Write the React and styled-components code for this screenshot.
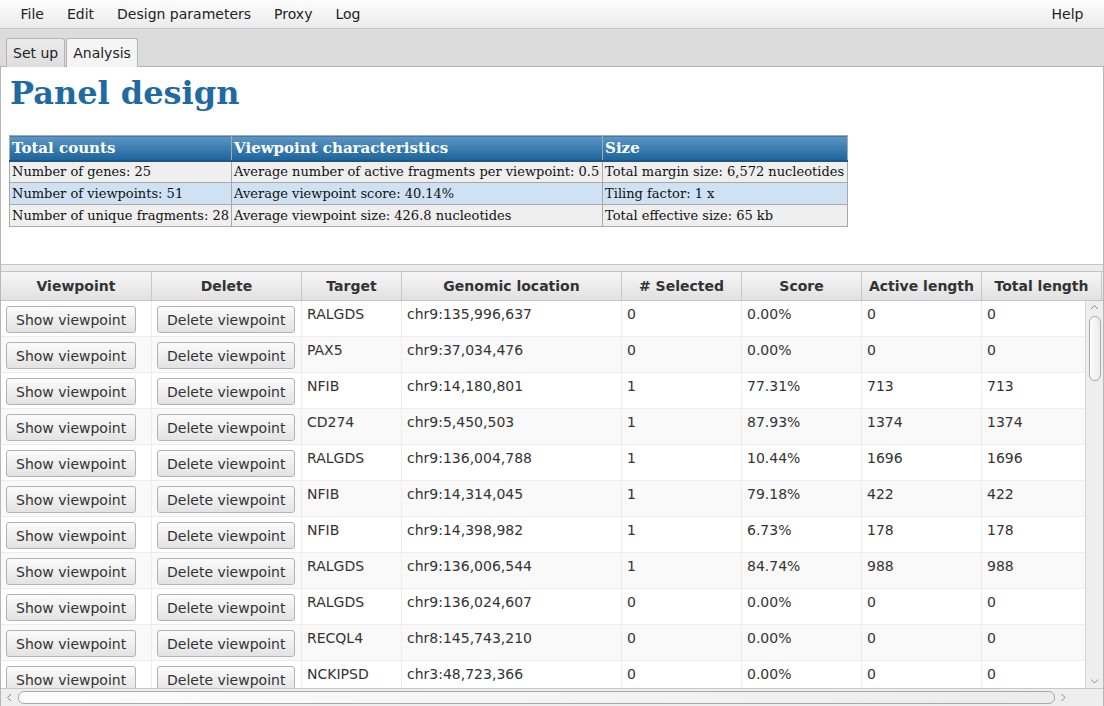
import React from 'react';
import styled, { createGlobalStyle } from 'styled-components';

// --- Data ---
const MENUS = ['File', 'Edit', 'Design parameters', 'Proxy', 'Log'];

const SUMMARY = {
  heads: ['Total counts', 'Viewpoint characteristics', 'Size'],
  rows: [
    ['Number of genes: 25', 'Average number of active fragments per viewpoint: 0.5', 'Total margin size: 6,572 nucleotides'],
    ['Number of viewpoints: 51', 'Average viewpoint score: 40.14%', 'Tiling factor: 1 x'],
    ['Number of unique fragments: 28', 'Average viewpoint size: 426.8 nucleotides', 'Total effective size: 65 kb'],
  ],
};

const COLUMNS = [
  { label: 'Viewpoint', width: 151 },
  { label: 'Delete', width: 150 },
  { label: 'Target', width: 100 },
  { label: 'Genomic location', width: 220 },
  { label: '# Selected', width: 120 },
  { label: 'Score', width: 120 },
  { label: 'Active length', width: 120 },
  { label: 'Total length', width: 120 },
];

const ROWS = [
  ['RALGDS', 'chr9:135,996,637', '0', '0.00%', '0', '0'],
  ['PAX5', 'chr9:37,034,476', '0', '0.00%', '0', '0'],
  ['NFIB', 'chr9:14,180,801', '1', '77.31%', '713', '713'],
  ['CD274', 'chr9:5,450,503', '1', '87.93%', '1374', '1374'],
  ['RALGDS', 'chr9:136,004,788', '1', '10.44%', '1696', '1696'],
  ['NFIB', 'chr9:14,314,045', '1', '79.18%', '422', '422'],
  ['NFIB', 'chr9:14,398,982', '1', '6.73%', '178', '178'],
  ['RALGDS', 'chr9:136,006,544', '1', '84.74%', '988', '988'],
  ['RALGDS', 'chr9:136,024,607', '0', '0.00%', '0', '0'],
  ['RECQL4', 'chr8:145,743,210', '0', '0.00%', '0', '0'],
  ['NCKIPSD', 'chr3:48,723,366', '0', '0.00%', '0', '0'],
];

const GRID = COLUMNS.map(c => `${c.width}px`).join(' ');

// --- Styles ---
const GlobalStyle = createGlobalStyle`
  html, body { margin: 0; padding: 0; background: #fff; }
  body { font-family: 'DejaVu Sans', 'Liberation Sans', sans-serif; font-size: 14px; color: #333; }
  * { box-sizing: border-box; }
`;

const Window = styled.div`
  width: 1104px; height: 706px; display: flex; flex-direction: column; overflow: hidden;
`;

const MenuBar = styled.div`
  height: 29px; flex: none; display: flex; align-items: center; padding: 0 9px;
  background: linear-gradient(#fdfdfd, #ebebeb); border-bottom: 1px solid #c4c4c4;
`;

const MenuItem = styled.span`
  padding: 0 11.5px; color: #222; line-height: 30px;
  margin-left: ${p => (p.right ? 'auto' : '0')};
`;

const TabBar = styled.div`
  height: 38px; flex: none; display: flex; align-items: flex-end; gap: 1px; padding: 0 6px;
  background: #dcdcdc; border-bottom: 1px solid #b4b4b4;
`;

const Tab = styled.div`
  height: 29px; padding: 0 6px; display: flex; align-items: center; margin-bottom: -1px;
  border: 1px solid #b4b4b4; border-bottom: none; border-radius: 3px 3px 0 0;
  background: ${p => (p.active ? '#f5f5f5' : 'linear-gradient(#ececec, #dedede)')};
  color: #222;
`;

const Content = styled.div`
  flex: 1; display: flex; flex-direction: column; min-height: 0;
  border-left: 1px solid #b8b8b8; border-right: 1px solid #b8b8b8; background: #fff;
`;

const Report = styled.div`
  height: 198px; flex: none; padding: 6px 8px 0; font-family: 'DejaVu Serif', 'Liberation Serif', serif;
  border-bottom: 1px solid #c6c6c6;
`;

const Title = styled.h1`
  margin: 0 0 0 1px; font-size: 32px; line-height: 41px; font-weight: bold; color: #1f6aa3;
`;

const SummaryTable = styled.table`
  margin-top: 21px; border-collapse: collapse; font-size: 13px; color: #111;
`;

const SumHead = styled.th`
  text-align: left; color: #fff; font-size: 15px; font-weight: bold; height: 25px; padding: 0 2px;
  background: linear-gradient(#5c96c5, #1b649c); border: 1px solid #a9a9a9;
  border-bottom: 2px solid #24557e; width: ${p => p.w}px;
`;

const SumCell = styled.td`
  height: 22px; padding: 0 2px; border: 1px solid #a9a9a9; white-space: nowrap;
  background: ${p => (p.alt ? '#cfe2f3' : '#efefef')};
`;

const Divider = styled.div`
  height: 7px; flex: none; background: #ececec; border-bottom: 1px solid #c2c2c2;
`;

const TableView = styled.div`
  flex: 1; min-height: 0; display: flex; flex-direction: column; background: #fff;
`;

const HeaderRow = styled.div`
  display: grid; grid-template-columns: ${GRID}; height: 29px; flex: none;
  background: linear-gradient(#f6f6f6, #e1e1e1); border-bottom: 1px solid #c4c4c4;
`;

const HeaderCell = styled.div`
  display: flex; align-items: center; justify-content: center; font-weight: bold; color: #333;
  border-right: 1px solid #c8c8c8; white-space: nowrap;
`;

const BodyArea = styled.div`
  flex: 1; min-height: 0; display: flex;
`;

const Rows = styled.div`
  flex: 1; overflow: hidden;
`;

const Row = styled.div`
  display: grid; grid-template-columns: ${GRID}; height: 36px;
  background: ${p => (p.odd ? '#f9f9f9' : '#fff')}; border-bottom: 1px solid #ececec;
`;

const Cell = styled.div`
  padding: 5px 5px 0; border-right: 1px solid #ececec; white-space: nowrap; color: #333;
`;

const ButtonCell = styled.div`
  padding: 5px 5px 0; border-right: 1px solid #ececec;
`;

const PushButton = styled.button`
  height: 27px; padding: 0 9px; font: inherit; font-size: 14px; color: #333;
  border: 1px solid #b3b3b3; border-radius: 3px; background: linear-gradient(#fbfbfb, #e3e3e3);
`;

const VScroll = styled.div`
  width: 18px; flex: none; background: #eeeeee; border-left: 1px solid #d4d4d4;
  display: flex; flex-direction: column; align-items: center; padding: 3px 0;
`;

const HScrollRow = styled.div`
  height: 18px; flex: none; display: flex; background: #eeeeee; border-top: 1px solid #c8c8c8;
`;

const HTrack = styled.div`
  flex: 1; display: flex; align-items: center; padding: 0 5px; gap: 5px;
`;

const Thumb = styled.div`
  border: 1px solid #a9a9a9; border-radius: 6px; background: linear-gradient(90deg, #fdfdfd, #ececec);
  ${p => (p.vertical ? 'width: 12px; height: 65px; margin-top: 5px;' : 'height: 13px; flex: 1;')}
`;

const Corner = styled.div`
  width: 18px; flex: none; background: #eeeeee;
`;

const Spacer = styled.div` flex: 1; `;

const Chevron = ({ dir }) => {
  const d = {
    up: 'M1 5 L4.5 1.5 L8 5',
    down: 'M1 1.5 L4.5 5 L8 1.5',
    left: 'M5 1 L1.5 4.5 L5 8',
    right: 'M1.5 1 L5 4.5 L1.5 8',
  }[dir];
  const vertical = dir === 'up' || dir === 'down';
  return (
    <svg width={vertical ? 9 : 7} height={vertical ? 7 : 9} viewBox={vertical ? '0 0 9 7' : '0 0 7 9'}>
      <path d={d} fill="none" stroke="#8a8a8a" strokeWidth="1" />
    </svg>
  );
};

// --- App ---
export default function App() {
  return (
    <Window>
      <GlobalStyle />
      <MenuBar>
        {MENUS.map(m => <MenuItem key={m}>{m}</MenuItem>)}
        <MenuItem right>Help</MenuItem>
      </MenuBar>

      <TabBar>
        <Tab>Set up</Tab>
        <Tab active>Analysis</Tab>
      </TabBar>

      <Content>
        <Report>
          <Title>Panel design</Title>
          <SummaryTable>
            <thead>
              <tr>
                {SUMMARY.heads.map((h, i) => <SumHead key={h} w={[222, 371, 245][i]}>{h}</SumHead>)}
              </tr>
            </thead>
            <tbody>
              {SUMMARY.rows.map((r, i) => (
                <tr key={i}>
                  {r.map((c, j) => <SumCell key={j} alt={i === 1}>{c}</SumCell>)}
                </tr>
              ))}
            </tbody>
          </SummaryTable>
        </Report>

        <Divider />

        <TableView>
          <HeaderRow>
            {COLUMNS.map(c => <HeaderCell key={c.label}>{c.label}</HeaderCell>)}
          </HeaderRow>
          <BodyArea>
            <Rows>
              {ROWS.map((r, i) => (
                <Row key={i} odd={i % 2 === 1}>
                  <ButtonCell><PushButton>Show viewpoint</PushButton></ButtonCell>
                  <ButtonCell><PushButton>Delete viewpoint</PushButton></ButtonCell>
                  {r.map((v, j) => <Cell key={j}>{v}</Cell>)}
                </Row>
              ))}
            </Rows>
            <VScroll>
              <Chevron dir="up" />
              <Thumb vertical />
              <Spacer />
              <Chevron dir="down" />
            </VScroll>
          </BodyArea>
          <HScrollRow>
            <HTrack>
              <Chevron dir="left" />
              <Thumb />
              <Chevron dir="right" />
              <span style={{ width: 8 }} />
            </HTrack>
            <Corner />
          </HScrollRow>
        </TableView>
      </Content>
    </Window>
  );
}
